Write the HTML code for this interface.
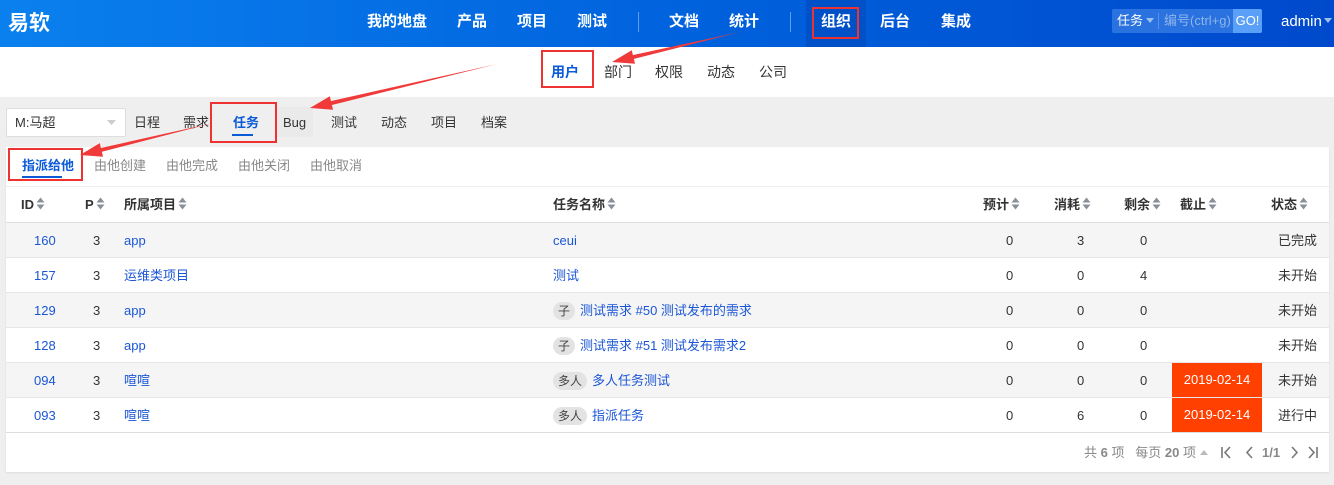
<!DOCTYPE html>
<html><head><meta charset="utf-8">
<style>
*{margin:0;padding:0;box-sizing:border-box}
body{width:1334px;height:485px;overflow:hidden;background:#efefef;font-family:"Liberation Sans","Noto Sans CJK SC",sans-serif;font-size:13px;color:#333;position:relative}
.a{position:absolute;white-space:nowrap}
#hd{position:absolute;left:0;top:0;width:1334px;height:47px;background:linear-gradient(90deg,#0a80ee,#0060dc 55%,#0049cc)}
#hd .n{position:absolute;top:12px;color:#fff;font-weight:bold;font-size:15px;line-height:20px}
.dv{position:absolute;top:12px;width:1px;height:20px;background:#5aa0f0}
#sub{position:absolute;left:0;top:47px;width:1334px;height:50px;background:#fff}
#sub .n{position:absolute;top:15px;font-size:14px;color:#333;line-height:20px}
.tb{position:absolute;top:114px;font-size:13px;color:#333;line-height:18px}
.st{position:absolute;top:157px;font-size:13px;color:#888;line-height:18px}
#panel{position:absolute;left:6px;top:147px;width:1323px;height:325px;background:#fff;box-shadow:0 1px 2px rgba(0,0,0,.08)}
.row{position:absolute;left:6px;width:1323px;height:35px;border-top:1px solid #e6e6e6}
.c{position:absolute;top:9px;line-height:18px;font-size:13px;white-space:nowrap}
.lk{color:#1a56d6}
.th{position:absolute;top:196px;font-weight:bold;font-size:13px;color:#333;line-height:18px;white-space:nowrap}
.so{display:inline-block;vertical-align:-1px;margin-left:2px}
.bd{display:inline-block;background:#e3e3e3;color:#444;border-radius:9px;padding:0 5px;line-height:18px;font-size:12px;margin-right:5px}
.red{position:absolute;left:1166px;width:90px;height:34px;background:#ff4000;color:#fff;text-align:center;line-height:34px;top:0;font-size:13px}
.box{position:absolute;border:2px solid #ee3232}
</style></head><body>
<div id="hd">
 <div class="a" style="left:8px;top:11px;color:#fff;font-size:21px;font-weight:bold;line-height:26px">易软</div>
 <div class="n" style="left:367px">我的地盘</div>
 <div class="n" style="left:457px">产品</div>
 <div class="n" style="left:517px">项目</div>
 <div class="n" style="left:577px">测试</div>
 <div class="dv" style="left:638px"></div>
 <div class="n" style="left:669px">文档</div>
 <div class="n" style="left:729px">统计</div>
 <div class="dv" style="left:790px"></div>
 <div style="position:absolute;left:806px;top:0;width:60px;height:47px;background:#0050c8"></div>
 <div class="n" style="left:821px">组织</div>
 <div class="n" style="left:880px">后台</div>
 <div class="n" style="left:941px">集成</div>
 <div style="position:absolute;left:1112px;top:9px;width:150px;height:24px;background:#2a72e0;border-radius:2px"></div>
 <div class="a" style="left:1117px;top:12px;color:#fff;font-size:13px;line-height:18px">任务<svg width="8" height="5" style="margin-left:3px;vertical-align:2px"><path d="M0 0H8L4 5Z" fill="#9cc0f0"/></svg></div>
 <div style="position:absolute;left:1158px;top:13px;width:1px;height:16px;background:#5a90e8"></div>
 <div class="a" style="left:1164px;top:12px;color:#8fb4ea;font-size:13px;line-height:18px">编号(ctrl+g)</div>
 <div class="a" style="left:1233px;top:9px;width:29px;height:24px;background:#5aa0f8;color:#fff;font-size:13px;line-height:24px;text-align:center;border-radius:0 2px 2px 0">GO!</div>
 <div class="a" style="left:1281px;top:12px;color:#fff;font-size:15px;line-height:20px">admin<svg width="8" height="5" style="margin-left:2px;vertical-align:3px"><path d="M0 0H8L4 5Z" fill="#9cc0f0"/></svg></div>
</div>
<div id="sub">
 <div class="n" style="left:551px;color:#0b5ad8;font-weight:bold">用户</div>
 <div class="n" style="left:604px">部门</div>
 <div class="n" style="left:655px">权限</div>
 <div class="n" style="left:707px">动态</div>
 <div class="n" style="left:759px">公司</div>
</div>
<div style="position:absolute;left:6px;top:108px;width:120px;height:29px;background:#fff;border:1px solid #ddd;border-radius:2px"></div>
<div class="a" style="left:15px;top:114px;font-size:13px;line-height:18px">M:马超</div>
<svg class="a" style="left:107px;top:120px" width="9" height="5"><path d="M0 0H9L4.5 5Z" fill="#ccc"/></svg>
<div class="tb" style="left:134px">日程</div>
<div class="tb" style="left:183px">需求</div>
<div class="tb" style="left:233px;color:#0b5ad8;font-weight:bold">任务</div>
<div style="position:absolute;left:232px;top:134px;width:21px;height:2px;background:#0b5ad8"></div>
<div style="position:absolute;left:277px;top:107px;width:36px;height:30px;background:#eaeaea"></div>
<div class="tb" style="left:283px">Bug</div>
<div class="tb" style="left:331px">测试</div>
<div class="tb" style="left:381px">动态</div>
<div class="tb" style="left:431px">项目</div>
<div class="tb" style="left:481px">档案</div>
<div id="panel"></div>
<div style="position:absolute;left:6px;top:147px;width:1323px;height:40px;border-bottom:1px solid #eee"></div>
<div class="st" style="left:22px;color:#0b5ad8;font-weight:bold">指派给他</div>
<div style="position:absolute;left:22px;top:176px;width:40px;height:2px;background:#0b5ad8"></div>
<div class="st" style="left:94px">由他创建</div>
<div class="st" style="left:166px">由他完成</div>
<div class="st" style="left:238px">由他关闭</div>
<div class="st" style="left:310px">由他取消</div>
<div class="th" style="left:21px">ID<svg class="so" width="9" height="13"><path d="M0.5 5.5L4.5 0.5L8.5 5.5Z M0.5 7.5L4.5 12.5L8.5 7.5Z" fill="#8a8f99"/></svg></div>
<div class="th" style="left:85px">P<svg class="so" width="9" height="13"><path d="M0.5 5.5L4.5 0.5L8.5 5.5Z M0.5 7.5L4.5 12.5L8.5 7.5Z" fill="#8a8f99"/></svg></div>
<div class="th" style="left:124px">所属项目<svg class="so" width="9" height="13"><path d="M0.5 5.5L4.5 0.5L8.5 5.5Z M0.5 7.5L4.5 12.5L8.5 7.5Z" fill="#8a8f99"/></svg></div>
<div class="th" style="left:553px">任务名称<svg class="so" width="9" height="13"><path d="M0.5 5.5L4.5 0.5L8.5 5.5Z M0.5 7.5L4.5 12.5L8.5 7.5Z" fill="#8a8f99"/></svg></div>
<div class="th" style="left:983px">预计<svg class="so" width="9" height="13"><path d="M0.5 5.5L4.5 0.5L8.5 5.5Z M0.5 7.5L4.5 12.5L8.5 7.5Z" fill="#8a8f99"/></svg></div>
<div class="th" style="left:1054px">消耗<svg class="so" width="9" height="13"><path d="M0.5 5.5L4.5 0.5L8.5 5.5Z M0.5 7.5L4.5 12.5L8.5 7.5Z" fill="#8a8f99"/></svg></div>
<div class="th" style="left:1124px">剩余<svg class="so" width="9" height="13"><path d="M0.5 5.5L4.5 0.5L8.5 5.5Z M0.5 7.5L4.5 12.5L8.5 7.5Z" fill="#8a8f99"/></svg></div>
<div class="th" style="left:1180px">截止<svg class="so" width="9" height="13"><path d="M0.5 5.5L4.5 0.5L8.5 5.5Z M0.5 7.5L4.5 12.5L8.5 7.5Z" fill="#8a8f99"/></svg></div>
<div class="th" style="left:1271px">状态<svg class="so" width="9" height="13"><path d="M0.5 5.5L4.5 0.5L8.5 5.5Z M0.5 7.5L4.5 12.5L8.5 7.5Z" fill="#8a8f99"/></svg></div>

<div class="row" style="top:222px;background:#f5f5f5;border-top:1px solid #ddd">
 <div class="c lk" style="left:28px">160</div><div class="c" style="left:87px">3</div><div class="c lk" style="left:118px">app</div>
 <div class="c lk" style="left:547px">ceui</div>
 <div class="c" style="left:1000px">0</div><div class="c" style="left:1071px">3</div><div class="c" style="left:1134px">0</div><div class="c" style="left:1272px">已完成</div>
</div>
<div class="row" style="top:257px;background:#fff">
 <div class="c lk" style="left:28px">157</div><div class="c" style="left:87px">3</div><div class="c lk" style="left:118px">运维类项目</div>
 <div class="c lk" style="left:547px">测试</div>
 <div class="c" style="left:1000px">0</div><div class="c" style="left:1071px">0</div><div class="c" style="left:1134px">4</div><div class="c" style="left:1272px">未开始</div>
</div>
<div class="row" style="top:292px;background:#f5f5f5">
 <div class="c lk" style="left:28px">129</div><div class="c" style="left:87px">3</div><div class="c lk" style="left:118px">app</div>
 <div class="c lk" style="left:547px"><span class="bd">子</span>测试需求 #50 测试发布的需求</div>
 <div class="c" style="left:1000px">0</div><div class="c" style="left:1071px">0</div><div class="c" style="left:1134px">0</div><div class="c" style="left:1272px">未开始</div>
</div>
<div class="row" style="top:327px;background:#fff">
 <div class="c lk" style="left:28px">128</div><div class="c" style="left:87px">3</div><div class="c lk" style="left:118px">app</div>
 <div class="c lk" style="left:547px"><span class="bd">子</span>测试需求 #51 测试发布需求2</div>
 <div class="c" style="left:1000px">0</div><div class="c" style="left:1071px">0</div><div class="c" style="left:1134px">0</div><div class="c" style="left:1272px">未开始</div>
</div>
<div class="row" style="top:362px;background:#f5f5f5">
 <div class="c lk" style="left:28px">094</div><div class="c" style="left:87px">3</div><div class="c lk" style="left:118px">喧喧</div>
 <div class="c lk" style="left:547px"><span class="bd">多人</span>多人任务测试</div>
 <div class="c" style="left:1000px">0</div><div class="c" style="left:1071px">0</div><div class="c" style="left:1134px">0</div>
 <div class="red">2019-02-14</div><div class="c" style="left:1272px">未开始</div>
</div>
<div class="row" style="top:397px;background:#fff;border-bottom:1px solid #ddd;height:36px">
 <div class="c lk" style="left:28px">093</div><div class="c" style="left:87px">3</div><div class="c lk" style="left:118px">喧喧</div>
 <div class="c lk" style="left:547px"><span class="bd">多人</span>指派任务</div>
 <div class="c" style="left:1000px">0</div><div class="c" style="left:1071px">6</div><div class="c" style="left:1134px">0</div>
 <div class="red">2019-02-14</div><div class="c" style="left:1272px">进行中</div>
</div>
<div class="a" style="left:1084px;top:444px;color:#888;font-size:13px;line-height:18px">共 <b>6</b> 项 &nbsp; 每页 <b>20</b> 项 <svg width="8" height="5" style="vertical-align:2px"><path d="M0 5H8L4 0Z" fill="#bbb"/></svg></div>
<svg class="a" style="left:1220px;top:446px" width="100" height="14" fill="none" stroke="#777" stroke-width="1.6">
 <path d="M2 1V12M10 1L5 6.5L10 12"/><path d="M32 1L27 6.5L32 12"/>
 <path d="M72 1L77 6.5L72 12"/><path d="M89 1L94 6.5L89 12M97 1V12"/>
</svg>
<div class="a" style="left:1262px;top:444px;color:#888;font-size:13px;font-weight:bold;line-height:18px">1/1</div>

<div class="box" style="left:541px;top:50px;width:53px;height:38px"></div>
<div class="box" style="left:210px;top:102px;width:67px;height:41px"></div>
<div class="box" style="left:8px;top:148px;width:75px;height:33px"></div>
<div class="box" style="left:812px;top:7px;width:47px;height:32px"></div>
<svg class="a" style="left:0;top:0" width="1334" height="485">
 <g fill="#f03a3a">
  <polygon points="740,32 632.9,55.1 631.8,50.2 612,62 635,63.8 633.9,58.9"/>
  <polygon points="497,64 330.9,101.1 329.8,96.2 310,108 333,109.8 331.9,105"/>
  <polygon points="213,123 100.9,148 99.8,143.1 80,155 103,156.7 101.9,151.8"/>
 </g>
</svg>
</body></html>
